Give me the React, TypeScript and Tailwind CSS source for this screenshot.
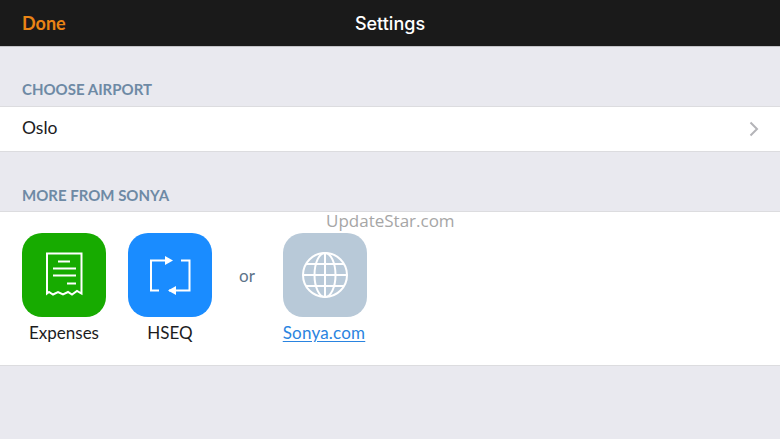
const sans = "font-['Lato','Liberation_Sans',sans-serif]";

function ReceiptIcon() {
  return (
    <svg width="84" height="84" viewBox="0 0 84 84" fill="none" stroke="white" strokeWidth="2">
      <path d="M25 20.5H59.5V60.5L55 58L50 61.5L46 59L41 61.5L36 59L31 61.5L27 59L25 60.5Z" />
      <path d="M36 28.5H48M31 35.5H54M31 42.5H54M45 50.5H54" strokeWidth="2.2" />
    </svg>
  );
}

function CycleIcon() {
  return (
    <svg width="84" height="84" viewBox="0 0 84 84" fill="none" stroke="white" strokeWidth="2">
      <path d="M38 27.5H23V57.5H31" />
      <path d="M41 57.5H61.5V27.5H53" />
      <path d="M37 23L45 27.5L37 32Z" fill="white" stroke="none" />
      <path d="M48 53L40 57.5L48 62Z" fill="white" stroke="none" />
    </svg>
  );
}

function GlobeIcon() {
  return (
    <svg width="84" height="84" viewBox="0 0 84 84" fill="none" stroke="white" strokeWidth="2">
      <circle cx="42" cy="42" r="22" />
      <ellipse cx="42" cy="42" rx="10.5" ry="22" />
      <path d="M42 20V64M20 42H64M23 31H61M23 53H61" />
    </svg>
  );
}

function AppTile({ color, label, children, link }: { color: string; label: string; children: React.ReactNode; link?: boolean }) {
  return (
    <div className="flex w-[84px] flex-col items-center">
      <div className={`h-[84px] w-[84px] rounded-[20px] ${color}`}>{children}</div>
      <span className={`mt-[5px] whitespace-nowrap text-[17px] leading-[22px] ${link ? "mr-[2px] tracking-[0.2px] text-[#2a84e0] underline underline-offset-2" : "text-[#1c1c1e]"}`}>
        {label}
      </span>
    </div>
  );
}

export default function App() {
  return (
    <div className={`relative flex h-[439px] w-[780px] flex-col overflow-hidden bg-[#e9e9ef] ${sans}`}>
      <header className="flex h-[47px] shrink-0 items-center justify-between border-b border-[#c4c4c8] bg-[#1a1a1a] px-[22px]">
        <span className="w-20 text-[18px] font-bold text-[#ea8415]">Done</span>
        <span className="font-['Inter',sans-serif] text-[18px] font-medium text-white">Settings</span>
        <span className="w-20" />
      </header>

      <h2 className="mt-[32px] px-[22px] text-[15px] leading-[20px] font-bold text-[#6e8aa5]">CHOOSE AIRPORT</h2>
      <div className="mt-[7px] flex h-[46px] items-center justify-between border-y border-[#dcdcdf] bg-white pr-[21px] pl-[22px]">
        <span className="pb-[2px] text-[17.5px] text-[#1c1c1e]">Oslo</span>
        <svg width="10" height="16" viewBox="0 0 10 16" fill="none" stroke="#b4b4b8" strokeWidth="2">
          <path d="M1.5 1.5L8 8L1.5 14.5" />
        </svg>
      </div>

      <h2 className="mt-[33px] px-[22px] text-[15px] leading-[20px] font-bold text-[#6e8aa5]">MORE FROM SONYA</h2>
      <div className="mt-[6px] flex h-[155px] items-start border-y border-[#dcdcdf] bg-white pt-[21px] pl-[22px]">
        <AppTile color="bg-[#17ab00]" label="Expenses"><ReceiptIcon /></AppTile>
        <div className="ml-[22px]">
          <AppTile color="bg-[#1a8cff]" label="HSEQ"><CycleIcon /></AppTile>
        </div>
        <span className="mt-[32px] ml-[27px] w-[44px] text-[17px] leading-[22px] text-[#5d7389]">or</span>
        <AppTile color="bg-[#b8c9d8]" label="Sonya.com" link><GlobeIcon /></AppTile>
      </div>

      <span className="absolute top-[210px] left-[326px] font-['Open_Sans',sans-serif] text-[17px] leading-[22px] text-[#a6a6a6]">UpdateStar.com</span>
    </div>
  );
}
